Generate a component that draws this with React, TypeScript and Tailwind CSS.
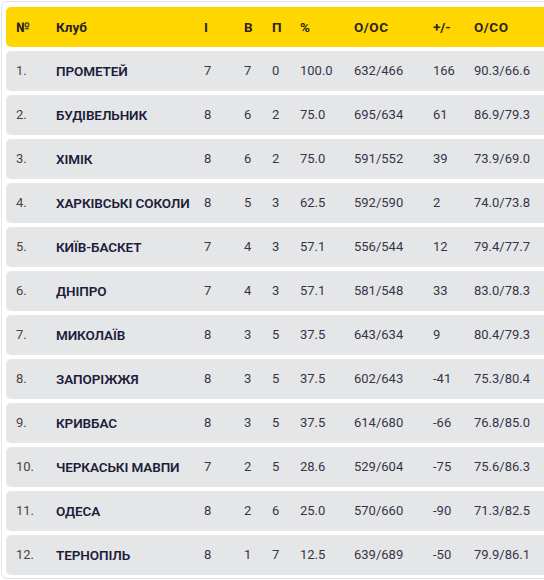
import React from "react";

const rows: [string, string, number, number, number, string, string, string, string][] = [
  ["1.", "ПРОМЕТЕЙ", 7, 7, 0, "100.0", "632/466", "166", "90.3/66.6"],
  ["2.", "БУДІВЕЛЬНИК", 8, 6, 2, "75.0", "695/634", "61", "86.9/79.3"],
  ["3.", "ХІМІК", 8, 6, 2, "75.0", "591/552", "39", "73.9/69.0"],
  ["4.", "ХАРКІВСЬКІ СОКОЛИ", 8, 5, 3, "62.5", "592/590", "2", "74.0/73.8"],
  ["5.", "КИЇВ-БАСКЕТ", 7, 4, 3, "57.1", "556/544", "12", "79.4/77.7"],
  ["6.", "ДНІПРО", 7, 4, 3, "57.1", "581/548", "33", "83.0/78.3"],
  ["7.", "МИКОЛАЇВ", 8, 3, 5, "37.5", "643/634", "9", "80.4/79.3"],
  ["8.", "ЗАПОРІЖЖЯ", 8, 3, 5, "37.5", "602/643", "-41", "75.3/80.4"],
  ["9.", "КРИВБАС", 8, 3, 5, "37.5", "614/680", "-66", "76.8/85.0"],
  ["10.", "ЧЕРКАСЬКІ МАВПИ", 7, 2, 5, "28.6", "529/604", "-75", "75.6/86.3"],
  ["11.", "ОДЕСА", 8, 2, 6, "25.0", "570/660", "-90", "71.3/82.5"],
  ["12.", "ТЕРНОПІЛЬ", 8, 1, 7, "12.5", "639/689", "-50", "79.9/86.1"],
];

const grid = "grid grid-cols-[40px_148px_40px_28px_28px_54px_79px_41px_1fr] items-center pl-[10px]";

export default function App() {
  return (
    <div className="w-[544px] h-[580px] overflow-hidden bg-white" style={{ fontFamily: "Roboto, 'Noto Sans', sans-serif" }}>
      <div className="w-[600px] ml-[1px] mt-[1px] border border-[#e3e4e6] rounded-[6px] bg-white pt-[5px] pb-[3px] px-[4px] flex flex-col gap-[4px]">
        <div className={`${grid} h-[40px] rounded-[5px] bg-[#ffd600] text-[13.5px] font-bold text-[#2a2520]`}>
          <div>№</div>
          <div>Клуб</div>
          <div>І</div>
          <div>В</div>
          <div>П</div>
          <div>%</div>
          <div className="tracking-[0.5px]">О/ОС</div>
          <div>+/-</div>
          <div className="tracking-[0.5px]">О/СО</div>
        </div>
        {rows.map((r) => (
          <div key={r[0]} className={`${grid} h-[40px] rounded-[5px] bg-[#e5e6e8] text-[13px] text-[#363548]`}>
            <div className="text-[#4a4340]">{r[0]}</div>
            <div className="font-semibold text-[13.5px] text-[#1c1d3a] whitespace-nowrap tracking-[-0.1px]">{r[1]}</div>
            <div>{r[2]}</div>
            <div>{r[3]}</div>
            <div>{r[4]}</div>
            <div>{r[5]}</div>
            <div>{r[6]}</div>
            <div>{r[7]}</div>
            <div>{r[8]}</div>
          </div>
        ))}
      </div>
    </div>
  );
}
